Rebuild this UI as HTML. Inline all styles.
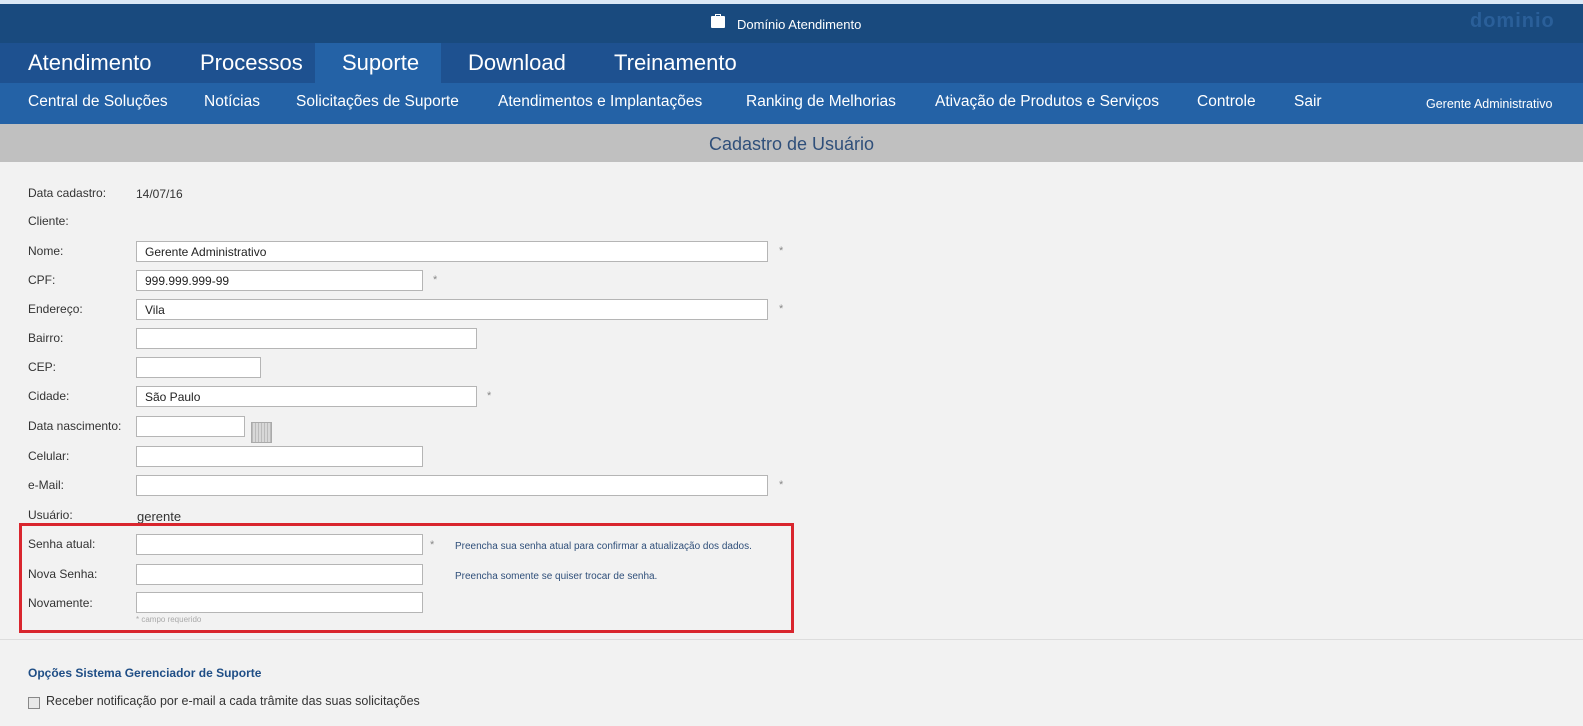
<!DOCTYPE html>
<html><head><meta charset="utf-8"><style>
*{margin:0;padding:0;box-sizing:border-box}
body{width:1583px;height:726px;background:#f2f2f2;font-family:"Liberation Sans",sans-serif;position:relative;overflow:hidden;color:#333}
.a{position:absolute;white-space:nowrap}
.lbl{position:absolute;left:28px;font-size:12px;color:#333}
.in{position:absolute;left:136px;height:21px;background:#fff;border:1px solid #b5b5b5;font-size:12px;padding:3px 8px;color:#222}
.st{position:absolute;font-size:11px;color:#888}
.n1{position:absolute;top:50px;font-size:22px;color:#fff}
.n2{position:absolute;top:93px;font-size:15.5px;color:#fff}
</style></head><body>
<div class="a" style="left:0;top:0;width:1583px;height:4px;background:#dbe8f6"></div>
<div class="a" style="left:0;top:4px;width:1583px;height:39px;background:#194a7e"></div>
<div class="a" style="left:711px;top:16px;width:14px;height:12px;background:#fff;border-radius:1px"></div>
<div class="a" style="left:715px;top:14px;width:6px;height:3px;border:1px solid #fff;border-bottom:none"></div>
<div class="a" style="left:737px;top:17px;font-size:13px;color:#fff">Domínio Atendimento</div>
<div class="a" style="left:1470px;top:10px;font-size:20px;font-weight:bold;color:#2a5f99;letter-spacing:1px">dominio</div>
<div class="a" style="left:0;top:43px;width:1583px;height:40px;background:#1e5190"></div>
<div class="a" style="left:315px;top:43px;width:126px;height:40px;background:#2462a6"></div>
<div class="n1" style="left:28px">Atendimento</div>
<div class="n1" style="left:200px">Processos</div>
<div class="n1" style="left:342px">Suporte</div>
<div class="n1" style="left:468px">Download</div>
<div class="n1" style="left:614px">Treinamento</div>
<div class="a" style="left:0;top:83px;width:1583px;height:41px;background:#2462a6"></div>
<div class="n2" style="left:28px">Central de Soluções</div>
<div class="n2" style="left:204px">Notícias</div>
<div class="n2" style="left:296px">Solicitações de Suporte</div>
<div class="n2" style="left:498px">Atendimentos e Implantações</div>
<div class="n2" style="left:746px">Ranking de Melhorias</div>
<div class="n2" style="left:935px">Ativação de Produtos e Serviços</div>
<div class="n2" style="left:1197px">Controle</div>
<div class="n2" style="left:1294px">Sair</div>
<div class="a" style="left:1426px;top:97px;font-size:12.5px;color:#fff">Gerente Administrativo</div>
<div class="a" style="left:0;top:124px;width:1583px;height:38px;background:#c0c0c0"></div>
<div class="a" style="left:0;top:134px;width:1583px;text-align:center;font-size:18px;color:#2f4f7a">Cadastro de Usuário</div>

<div class="lbl" style="top:186px">Data cadastro:</div><div class="a" style="left:136px;top:187px;font-size:12px">14/07/16</div>
<div class="lbl" style="top:214px">Cliente:</div>
<div class="lbl" style="top:244px">Nome:</div><div class="in" style="top:241px;width:632px">Gerente Administrativo</div><div class="st" style="left:779px;top:245px">*</div>
<div class="lbl" style="top:273px">CPF:</div><div class="in" style="top:270px;width:287px">999.999.999-99</div><div class="st" style="left:433px;top:274px">*</div>
<div class="lbl" style="top:302px">Endereço:</div><div class="in" style="top:299px;width:632px">Vila</div><div class="st" style="left:779px;top:303px">*</div>
<div class="lbl" style="top:331px">Bairro:</div><div class="in" style="top:328px;width:341px"></div>
<div class="lbl" style="top:360px">CEP:</div><div class="in" style="top:357px;width:125px"></div>
<div class="lbl" style="top:389px">Cidade:</div><div class="in" style="top:386px;width:341px">São Paulo</div><div class="st" style="left:487px;top:390px">*</div>
<div class="lbl" style="top:419px">Data nascimento:</div><div class="in" style="top:416px;width:109px"></div>
<div class="a" style="left:251px;top:422px;width:21px;height:21px;background:repeating-linear-gradient(90deg,#bbb 0 1px,#d8d8d8 1px 3px);border:1px solid #aaa"></div>
<div class="lbl" style="top:449px">Celular:</div><div class="in" style="top:446px;width:287px"></div>
<div class="lbl" style="top:478px">e-Mail:</div><div class="in" style="top:475px;width:632px"></div><div class="st" style="left:779px;top:479px">*</div>
<div class="lbl" style="top:508px">Usuário:</div><div class="a" style="left:137px;top:509px;font-size:13px">gerente</div>
<div class="a" style="left:19px;top:523px;width:775px;height:110px;border:3px solid #d9262e"></div>
<div class="lbl" style="top:537px">Senha atual:</div><div class="in" style="top:534px;width:287px"></div><div class="st" style="left:430px;top:539px">*</div>
<div class="a" style="left:455px;top:541px;font-size:10px;color:#2f4f7a">Preencha sua senha atual para confirmar a atualização dos dados.</div>
<div class="lbl" style="top:567px">Nova Senha:</div><div class="in" style="top:564px;width:287px"></div>
<div class="a" style="left:455px;top:571px;font-size:10px;color:#2f4f7a">Preencha somente se quiser trocar de senha.</div>
<div class="lbl" style="top:596px">Novamente:</div><div class="in" style="top:592px;width:287px"></div>
<div class="a" style="left:136px;top:615px;font-size:8px;color:#aaa">* campo requerido</div>
<div class="a" style="left:0;top:639px;width:1583px;height:1px;background:#ddd"></div>
<div class="a" style="left:28px;top:666px;font-size:12px;font-weight:bold;color:#1f4e86">Opções Sistema Gerenciador de Suporte</div>
<div class="a" style="left:28px;top:697px;width:12px;height:12px;border:1px solid #888;background:#e8e8e8"></div>
<div class="a" style="left:46px;top:694px;font-size:12.5px;color:#333">Receber notificação por e-mail a cada trâmite das suas solicitações</div>
</body></html>
